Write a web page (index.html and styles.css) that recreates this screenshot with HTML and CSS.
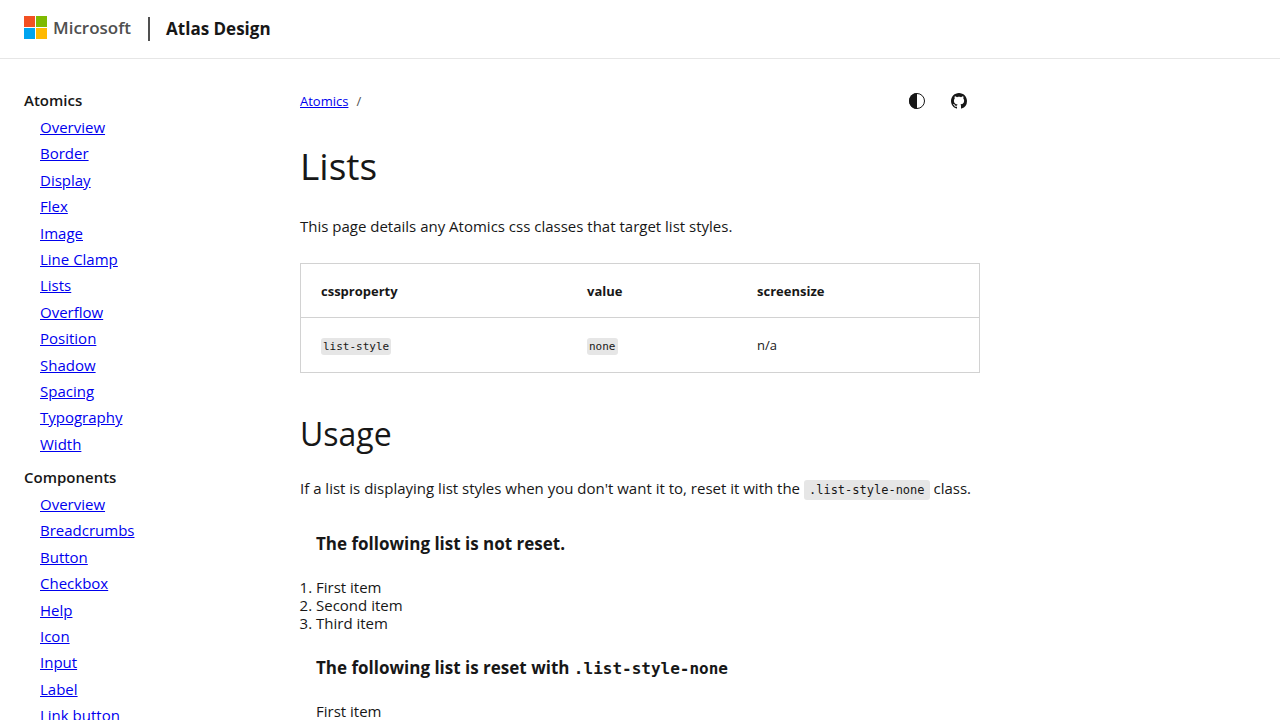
FILE: index.html
```html
<!DOCTYPE html>
<html lang="en">
<head>
<meta charset="utf-8">
<meta name="viewport" content="width=device-width, initial-scale=1">
<title>Lists - Atlas Design</title>
<link rel="stylesheet" href="styles.css">
</head>
<body>
<header class="site-header">
  <div class="brand">
    <svg class="brand-mark" viewBox="0 0 23 23" aria-hidden="true">
      <path fill="#f25022" d="M0 0h11v11H0z"/>
      <path fill="#7fba00" d="M12 0h11v11H12z"/>
      <path fill="#00a4ef" d="M0 12h11v11H0z"/>
      <path fill="#ffb900" d="M12 12h11v11H12z"/>
    </svg>
    <span class="brand-name">Microsoft</span>
  </div>
  <span class="site-title">Atlas Design</span>
</header>
<div class="layout">
  <nav class="sidebar" aria-label="Documentation">
    <h2 class="nav-heading">Atomics</h2>
    <ul class="nav-list">
      <li><a href="#">Overview</a></li>
      <li><a href="#">Border</a></li>
      <li><a href="#">Display</a></li>
      <li><a href="#">Flex</a></li>
      <li><a href="#">Image</a></li>
      <li><a href="#">Line Clamp</a></li>
      <li><a href="#">Lists</a></li>
      <li><a href="#">Overflow</a></li>
      <li><a href="#">Position</a></li>
      <li><a href="#">Shadow</a></li>
      <li><a href="#">Spacing</a></li>
      <li><a href="#">Typography</a></li>
      <li><a href="#">Width</a></li>
    </ul>
    <h2 class="nav-heading">Components</h2>
    <ul class="nav-list">
      <li><a href="#">Overview</a></li>
      <li><a href="#">Breadcrumbs</a></li>
      <li><a href="#">Button</a></li>
      <li><a href="#">Checkbox</a></li>
      <li><a href="#">Help</a></li>
      <li><a href="#">Icon</a></li>
      <li><a href="#">Input</a></li>
      <li><a href="#">Label</a></li>
      <li><a href="#">Link button</a></li>
    </ul>
  </nav>
  <main class="content">
    <div class="toolbar">
      <nav class="breadcrumbs" aria-label="Breadcrumbs"><a href="#">Atomics</a><span class="separator">/</span></nav>
      <div class="actions">
        <button class="icon-button" type="button" aria-label="Change theme">
          <svg viewBox="0 0 16 16"><circle cx="8" cy="8" r="7.5" fill="#fff" stroke="#171717"/><path fill="#171717" d="M8 0a8 8 0 0 0 0 16z"/></svg>
        </button>
        <a class="icon-button" href="#" aria-label="GitHub">
          <svg viewBox="0 0 16 16"><path fill="#171717" d="M8 0C3.58 0 0 3.58 0 8c0 3.54 2.29 6.53 5.47 7.59.4.07.55-.17.55-.38 0-.19-.01-.82-.01-1.49-2.01.37-2.53-.49-2.69-.94-.09-.23-.48-.94-.82-1.13-.28-.15-.68-.52-.01-.53.63-.01 1.08.58 1.23.82.72 1.21 1.87.87 2.33.66.07-.52.28-.87.51-1.07-1.78-.2-3.64-.89-3.64-3.95 0-.87.31-1.59.82-2.15-.08-.2-.36-1.02.08-2.12 0 0 .67-.21 2.2.82.64-.18 1.32-.27 2-.27s1.36.09 2 .27c1.53-1.04 2.2-.82 2.2-.82.44 1.1.16 1.92.08 2.12.51.56.82 1.27.82 2.15 0 3.07-1.87 3.75-3.65 3.95.29.25.54.73.54 1.48 0 1.07-.01 1.93-.01 2.2 0 .21.15.46.55.38A8.01 8.01 0 0 0 16 8c0-4.42-3.58-8-8-8z"/></svg>
        </a>
      </div>
    </div>
    <h1 class="page-title">Lists</h1>
    <p class="text">This page details any Atomics css classes that target list styles.</p>
    <table class="table">
      <thead>
        <tr><th class="col-property">cssproperty</th><th class="col-value">value</th><th>screensize</th></tr>
      </thead>
      <tbody>
        <tr><td><code class="code">list-style</code></td><td><code class="code">none</code></td><td>n/a</td></tr>
      </tbody>
    </table>
    <h2 class="section-title">Usage</h2>
    <p class="text">If a list is displaying list styles when you don't want it to, reset it with the <code class="code">.list-style-none</code> class.</p>
    <h3 class="list-title">The following list is not reset.</h3>
    <ol class="list">
      <li>First item</li>
      <li>Second item</li>
      <li>Third item</li>
    </ol>
    <h3 class="list-title">The following list is reset with <code>.list-style-none</code></h3>
    <ol class="list list-style-none">
      <li>First item</li>
    </ol>
  </main>
</div>
</body>
</html>
```
FILE: styles.css
```css
* { box-sizing: border-box; }
body {
  margin: 0;
  background: #fff;
  color: #171717;
  font-family: "Segoe UI", "Open Sans", "Noto Sans", sans-serif;
  font-size: 15px;
  line-height: 24px;
}
a { color: #00e; }
code { font-family: "DejaVu Sans Mono", monospace; line-height: 1; }
.site-header {
  display: flex;
  align-items: center;
  height: 59px;
  padding: 0 24px;
  border-bottom: 1px solid #e6e6e6;
}
.brand {
  display: flex;
  align-items: center;
  gap: 6px;
  height: 24px;
  padding-right: 17px;
  border-right: 2px solid #505050;
}
.brand-mark { width: 23px; height: 23px; margin-bottom: 3px; }
.brand-name {
  color: #505050;
  font-size: 17px;
  font-weight: 600;
  padding-bottom: 2px;
}
.site-title { padding-left: 16px; font-size: 17px; font-weight: 700; }
.layout { display: grid; grid-template-columns: 276px minmax(0, 680px); padding: 28px 24px 0; }
.nav-heading { margin: 0; font-size: 15px; font-weight: 600; line-height: 27px; }
.nav-list {
  margin: 0 0 7px;
  padding: 0 0 0 16px;
  list-style: none;
  line-height: 1.76;
}
.toolbar { display: flex; justify-content: space-between; align-items: center; font-size: 13px; height: 28px; }
.separator { margin-left: 8px; color: #505050; }
.actions { display: flex; gap: 10px; padding-right: 5px; }
.icon-button {
  display: flex;
  justify-content: center;
  align-items: center;
  width: 32px;
  height: 28px;
  padding: 0;
  border: 0;
  background: none;
}
.icon-button svg { width: 16px; height: 16px; }
.page-title { margin: 25px 0 0; font-size: 37px; font-weight: 400; line-height: 52px; }
.text { margin: 22px 0 0; }
.table {
  width: 100%;
  margin-top: 25px;
  border: 1px solid #d2d2d2;
  border-spacing: 0;
  font-size: 13px;
  text-align: left;
}
.table th, .table td { padding: 15px 20px; }
.table th { padding-bottom: 14px; font-weight: 700; border-bottom: 1px solid #d2d2d2; }
.col-property { width: 266px; }
.col-value { width: 170px; }
.code { padding: 3px 5px; border-radius: 3px; background: #e6e6e6; font-size: 12px; }
.table .code { font-size: 11px; padding: 2px; }
.section-title { margin: 39px 0 0; font-size: 32px; font-weight: 400; line-height: 44px; }
.section-title + .text { margin-top: 20px; }
.list-title { margin: 32px 0 0 16px; font-size: 17px; font-weight: 700; line-height: 24px; }
.list + .list-title { margin-top: 24px; }
.list-title code { font-size: 16px; }
.list { margin: 22px 0 0; padding: 0 0 0 16px; line-height: 18px; }
.list-style-none { list-style: none; }
```
